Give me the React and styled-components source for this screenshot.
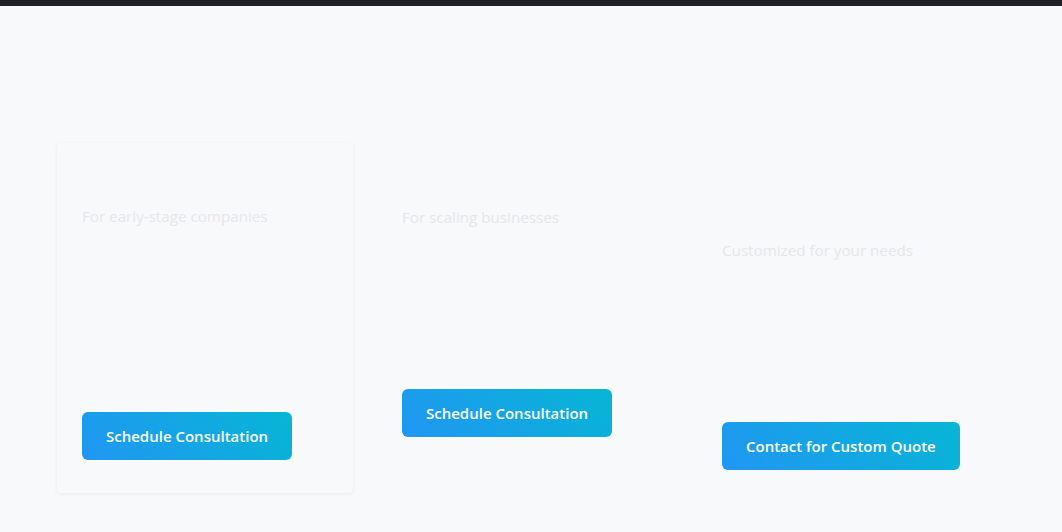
import React from 'react';
import styled, { createGlobalStyle } from 'styled-components';

const GlobalStyle = createGlobalStyle`
  html, body {
    margin: 0;
    padding: 0;
    background: #f8f9fb;
    font-family: 'Open Sans', 'Noto Sans', sans-serif;
  }
`

const plans = [
  { id: 'starter', tagline: 'For early-stage companies', cta: 'Schedule Consultation', shift: 0, spacer: 185, raised: true },
  { id: 'growth', tagline: 'For scaling businesses', cta: 'Schedule Consultation', shift: 1, spacer: 161, raised: false },
  { id: 'enterprise', tagline: 'Customized for your needs', cta: 'Contact for Custom Quote', shift: 34, spacer: 161, raised: false },
]

export default function App() {
  return (
    <>
      <GlobalStyle />
      <TopBar />
      <PageWrapper>
        <CardGrid>
          {plans.map(plan => (
            <Card key={plan.id} $shift={plan.shift} $raised={plan.raised}>
              <CardHeader />
              <Tagline>{plan.tagline}</Tagline>
              <FeatureArea $height={plan.spacer} />
              <CtaButton type="button">{plan.cta}</CtaButton>
            </Card>
          ))}
        </CardGrid>
      </PageWrapper>
    </>
  )
}

const TopBar = styled.div`
  height: 6px;
  background: #1f2228;
`

const PageWrapper = styled.main`
  min-height: 526px;
  padding: 137px 0 0 57px;
  box-sizing: border-box;
`

const CardGrid = styled.div`
  display: grid;
  grid-template-columns: repeat(3, 296px);
  column-gap: 24px;
  align-items: start;
`

const Card = styled.div`
  margin-top: ${p => p.$shift}px;
  padding: 25px 25px 33px;
  display: flex;
  flex-direction: column;
  align-items: flex-start;
  background: #f8f9fb;
  border-radius: 4px;
  box-shadow: ${p => (p.$raised ? '0 1px 4px rgba(0, 0, 0, 0.06)' : 'none')};
`

const CardHeader = styled.div`
  height: 37px;
`

const Tagline = styled.p`
  margin: 0;
  font-size: 15.2px;
  line-height: 22px;
  color: #e6e7ea;
`

const FeatureArea = styled.div`
  height: ${p => p.$height}px;
`

const CtaButton = styled.button`
  height: 48px;
  padding: 0 24px;
  border: none;
  border-radius: 6px;
  background: linear-gradient(45deg, #2196f3, #06b6d4);
  color: #ffffff;
  font-family: inherit;
  font-size: 15px;
  font-weight: 600;
  cursor: pointer;
`
